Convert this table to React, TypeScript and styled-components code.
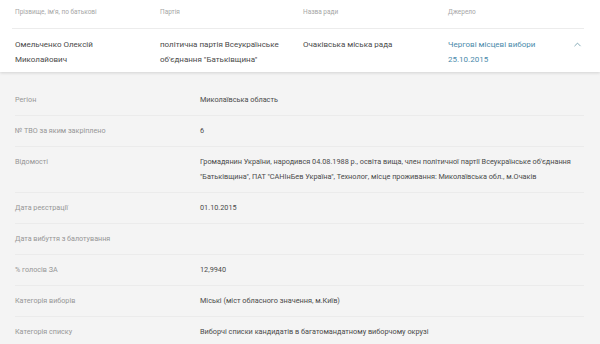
import styled, { createGlobalStyle } from "styled-components";
import { ChevronUp } from "lucide-react";

const GlobalStyle = createGlobalStyle`
  body {
    margin: 0;
    background: #f4f4f4;
    font-family: Roboto, "Noto Sans", sans-serif;
  }
`;

const details: { label: string; value: string }[] = [
  { label: "Регіон", value: "Миколаївська область" },
  { label: "№ ТВО за яким закріплено", value: "6" },
  {
    label: "Відомості",
    value:
      "Громадянин України, народився 04.08.1988 р., освіта вища, член політичної партії Всеукраїнське об'єднання \"Батьківщина\", ПАТ \"САНІнБев Україна\", Технолог, місце проживання: Миколаївська обл., м.Очаків",
  },
  { label: "Дата реєстрації", value: "01.10.2015" },
  { label: "Дата вибуття з балотування", value: "" },
  { label: "% голосів ЗА", value: "12,9940" },
  { label: "Категорія виборів", value: "Міські (міст обласного значення, м.Київ)" },
  {
    label: "Категорія списку",
    value: "Виборчі списки кандидатів в багатомандатному виборчому окрузі",
  },
];

export default function App() {
  return (
    <>
      <GlobalStyle />
      <Card>
        <HeadRow>
          <HeadCell>Прізвище, ім'я, по батькові</HeadCell>
          <HeadCell>Партія</HeadCell>
          <HeadCell>Назва ради</HeadCell>
          <HeadCell>Джерело</HeadCell>
        </HeadRow>
        <DataRow>
          <Cell $pad={40}>Омельченко Олексій Миколайович</Cell>
          <Cell $pad={10}>політична партія Всеукраїнське об'єднання "Батьківщина"</Cell>
          <Cell $pad={10}>Очаківська міська рада</Cell>
          <SourceCell>
            <Link>Чергові місцеві вибори 25.10.2015</Link>
            <Toggle>
              <ChevronUp size={11} strokeWidth={1.6} />
            </Toggle>
          </SourceCell>
        </DataRow>
      </Card>
      <Details>
        {details.map((d) => (
          <DetailRow key={d.label}>
            <Label>{d.label}</Label>
            <Value>{d.value}</Value>
          </DetailRow>
        ))}
      </Details>
    </>
  );
}

const Card = styled.div`
  background: #fff;
  padding: 0 16px 0 12px;
  box-shadow: 0 1px 3px rgba(0, 0, 0, 0.14);
  position: relative;
  z-index: 1;
`;

const Grid = styled.div`
  display: grid;
  grid-template-columns: 145px 143px 145px 1fr;
  padding-left: 3px;
`;

const HeadRow = styled(Grid)`
  height: 29px;
  box-sizing: border-box;
  padding-top: 6px;
  border-bottom: 1px solid #ececec;
`;

const HeadCell = styled.div`
  font-size: 6.5px;
  line-height: 12px;
  color: #a6a6a6;
`;

const DataRow = styled(Grid)`
  padding-top: 8px;
  padding-bottom: 5px;
`;

const Cell = styled.div<{ $pad: number }>`
  font-size: 8px;
  line-height: 15px;
  color: #4a4a4a;
  padding-right: ${(p) => p.$pad}px;
`;

const SourceCell = styled.div`
  display: flex;
  justify-content: space-between;
  align-items: flex-start;
`;

const Link = styled.div`
  font-size: 8px;
  line-height: 15px;
  color: #4a8aab;
  width: 110px;
`;

const Toggle = styled.div`
  color: #5b8d9e;
  margin-top: 2px;
  margin-right: 1px;
  display: flex;
`;

const Details = styled.div`
  padding: 13px 16px 0 15px;
`;

const DetailRow = styled.div`
  display: grid;
  grid-template-columns: 185px 1fr;
  padding: 7px 0 8px;
  border-bottom: 1px solid #ebebeb;
  &:last-child {
    border-bottom: none;
  }
`;

const Label = styled.div`
  font-size: 7.2px;
  line-height: 15px;
  color: #969696;
`;

const Value = styled.div`
  font-size: 7.3px;
  line-height: 15px;
  color: #4a4a4a;
  min-height: 15px;
`;
